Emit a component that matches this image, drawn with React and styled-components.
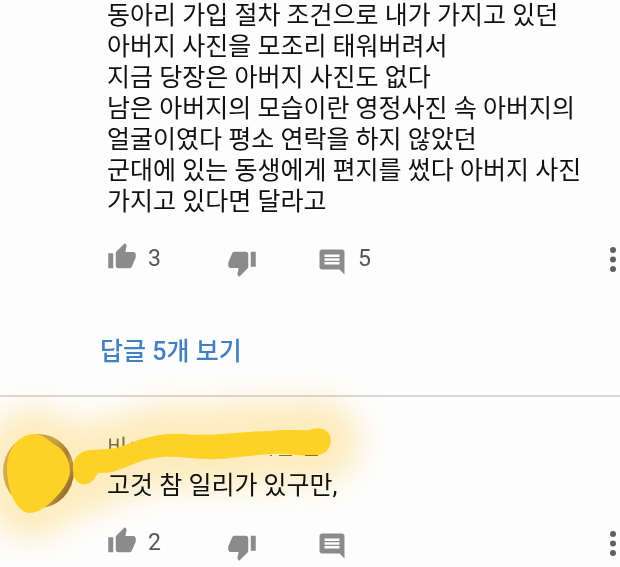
import React from 'react';
import styled, { createGlobalStyle } from 'styled-components';
import { MdThumbUp, MdThumbDown, MdComment } from 'react-icons/md';

const GlobalStyle = createGlobalStyle`
  body {
    margin: 0;
    background: #fdfdfd;
    font-family: Roboto, 'Noto Sans CJK KR', sans-serif;
    color: #111;
    overflow: hidden;
  }
`;

const Page = styled.main`
  display: flex;
  flex-direction: column;
`;

const Comment = styled.article`
  position: relative;
  display: grid;
  grid-template-columns: 107px minmax(0, 1fr);
  padding-top: ${(p) => (p.$divided ? '28px' : '0')};
  border-top: ${(p) => (p.$divided ? '2px solid #dadada' : 'none')};
`;

const Side = styled.div`
  padding: 9px 0 0 3px;
`;

const Avatar = styled.div`
  width: 71px;
  height: 74px;
  border-radius: 50%;
  background: linear-gradient(120deg, #d9c283 0%, #c9a854 50%, #a8873c 66%, #c2a35c 74%, #9c7a35 84%, #b89447 100%);
`;

const Content = styled.div`
  min-width: 0;
`;

const Author = styled.h2`
  margin: 0;
  font-size: 22px;
  line-height: 45px;
  font-weight: 400;
  color: #7c7452;
`;

const Body = styled.p`
  margin: 0;
  font-size: 25px;
  line-height: 31px;
  white-space: pre-line;
`;

const Actions = styled.div`
  display: grid;
  grid-template-columns: 120px 90px 1fr auto;
  align-items: start;
  height: 36px;
  margin-top: 25px;
  padding-right: 3px;
`;

const Action = styled.button`
  display: flex;
  align-items: flex-start;
  gap: 11px;
  padding: ${(p) => p.$drop || '0'} 0 0;
  border: 0;
  background: none;
  color: #8b8b8b;
  font: inherit;
  cursor: pointer;

  svg {
    flex: none;
  }
`;

const Count = styled.span`
  font-size: 23px;
  line-height: 24px;
  color: #555;
  padding-top: ${(p) => p.$drop || '0'};
`;

const ReplyLink = styled.a`
  align-self: flex-start;
  margin: 57px 0 26px 100px;
  font-size: 25px;
  line-height: 34px;
  font-weight: 500;
  color: #4280c2;
  text-decoration: none;
`;

const Marker = styled.svg`
  position: absolute;
  left: 0;
  top: -50px;
  width: 420px;
  height: 220px;
  pointer-events: none;
`;

const Glow = styled(Marker)`
  mix-blend-mode: multiply;
`;

function MoreIcon() {
  return (
    <svg width="8" height="28" viewBox="0 0 8 28" fill="#606060" aria-hidden="true">
      <circle cx="4" cy="4" r="3" />
      <circle cx="4" cy="13.5" r="3" />
      <circle cx="4" cy="23" r="3" />
    </svg>
  );
}

function ActionBar({ likes, replies }) {
  return (
    <Actions>
      <Action aria-label={`좋아요 ${likes}`}>
        <MdThumbUp size={30} />
        <Count $drop="5px">{likes}</Count>
      </Action>
      <Action $drop="6px" aria-label="싫어요">
        <MdThumbDown size={30} />
      </Action>
      <Action $drop="5px" aria-label="답글">
        <MdComment size={30} />
        {replies && <Count>{replies}</Count>}
      </Action>
      <Action $drop="4px" aria-label="더보기">
        <MoreIcon />
      </Action>
    </Actions>
  );
}

const firstComment = `동아리 가입 절차 조건으로 내가 가지고 있던
아버지 사진을 모조리 태워버려서
지금 당장은 아버지 사진도 없다
남은 아버지의 모습이란 영정사진 속 아버지의
얼굴이였다 평소 연락을 하지 않았던
군대에 있는 동생에게 편지를 썼다 아버지 사진
가지고 있다면 달라고`;

const strokePath =
  'M73 465C74 457 81 450 92 450L108 449C122 448 130 442 142 439C157 434 172 433 185 434C212 437 240 431 270 431C286 429 300 431 310 430C315 427 327 427 330 436C333 446 326 455 317 455C300 457 290 453 272 454C240 456 225 460 205 459C185 458 170 455 155 458C138 460 125 469 112 472C103 474 98 471 96 476C93 482 88 485 82 484C75 483 72 474 73 465Z';
const blobPath =
  'M34 434C43 434 49 441 55 445C64 449 70 460 70 472C69 482 62 491 55 498C46 508 37 513 29 513C15 511 8 490 7 472C6 450 18 435 34 434Z';

export default function App() {
  return (
    <Page>
      <GlobalStyle />
      <Comment>
        <Side />
        <Content>
          <Body>{firstComment}</Body>
          <ActionBar likes="3" replies="5" />
        </Content>
      </Comment>
      <ReplyLink href="#replies">답글 5개 보기</ReplyLink>
      <Comment $divided>
        <Side>
          <Avatar />
        </Side>
        <Content>
          <Author>비ㄱ</Author>
          <Body>고것 참 일리가 있구만,</Body>
          <ActionBar likes="2" />
        </Content>
        <Glow viewBox="0 347 420 220" aria-hidden="true">
          <defs>
            <filter id="wide" filterUnits="userSpaceOnUse" x="-100" y="300" width="560" height="340">
              <feGaussianBlur stdDeviation="15" />
            </filter>
          </defs>
          <g filter="url(#wide)" fill="#ffdc80" stroke="#ffdc80" strokeLinejoin="round" opacity="0.5">
            <path d={strokePath} strokeWidth="58" />
            <path d={blobPath} strokeWidth="52" />
          </g>
        </Glow>
        <Marker viewBox="0 347 420 220" aria-hidden="true">
          <g fill="#fcd227">
            <path d={strokePath} />
            <path d={blobPath} />
          </g>
          <path d="M270 455.500h2M279 455.500h13M305 455.500h13" stroke="#8a7420" strokeWidth="1" />
        </Marker>
      </Comment>
    </Page>
  );
}
